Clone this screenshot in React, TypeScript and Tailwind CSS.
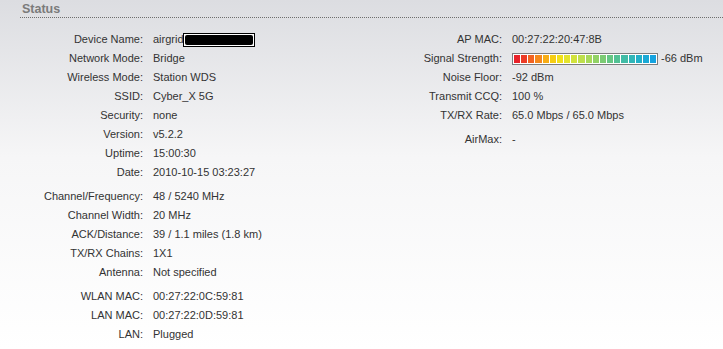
import type { ReactNode } from 'react';

type Row = { label: string; value: ReactNode };

const SIGNAL_COLORS = [
  '#e8222a', '#ec3b26', '#f26322', '#f5891d', '#f7ad16', '#f6cd12', '#f1e01a', '#e4e42c',
  '#d2e23c', '#bedf4c', '#a8d95a', '#92d266', '#7ccb74', '#66c684', '#52c194', '#40bca6',
  '#30b6b8', '#22b0c8', '#1aa9d6', '#15a3e0',
];

function SignalBar() {
  return (
    <span className="flex items-center">
      <span className="flex h-[12px] w-[146px] gap-px border border-[#7d7d7d] bg-white p-px">
        {SIGNAL_COLORS.map((c) => (
          <span key={c} className="h-full flex-1" style={{ backgroundColor: c }} />
        ))}
      </span>
      <span className="ml-[3px]">-66 dBm</span>
    </span>
  );
}

function Redacted() {
  return (
    <span className="flex items-center">
      <span>airgrid</span>
      <span className="-ml-[1px] flex h-[14px] w-[72px] border border-black bg-white p-px">
        <span className="h-full w-full rounded-[2px] bg-black" />
      </span>
    </span>
  );
}

const LEFT: Row[][] = [
  [
    { label: 'Device Name:', value: <Redacted /> },
    { label: 'Network Mode:', value: 'Bridge' },
    { label: 'Wireless Mode:', value: 'Station WDS' },
    { label: 'SSID:', value: 'Cyber_X 5G' },
    { label: 'Security:', value: 'none' },
    { label: 'Version:', value: 'v5.2.2' },
    { label: 'Uptime:', value: '15:00:30' },
    { label: 'Date:', value: '2010-10-15 03:23:27' },
  ],
  [
    { label: 'Channel/Frequency:', value: '48 / 5240 MHz' },
    { label: 'Channel Width:', value: '20 MHz' },
    { label: 'ACK/Distance:', value: '39 / 1.1 miles (1.8 km)' },
    { label: 'TX/RX Chains:', value: '1X1' },
    { label: 'Antenna:', value: 'Not specified' },
  ],
  [
    { label: 'WLAN MAC:', value: '00:27:22:0C:59:81' },
    { label: 'LAN MAC:', value: '00:27:22:0D:59:81' },
    { label: 'LAN:', value: 'Plugged' },
  ],
];

const RIGHT: Row[][] = [
  [
    { label: 'AP MAC:', value: '00:27:22:20:47:8B' },
    { label: 'Signal Strength:', value: <SignalBar /> },
    { label: 'Noise Floor:', value: '-92 dBm' },
    { label: 'Transmit CCQ:', value: '100 %' },
    { label: 'TX/RX Rate:', value: '65.0 Mbps / 65.0 Mbps' },
  ],
  [{ label: 'AirMax:', value: '-' }],
];

function Groups({ groups, labelWidth }: { groups: Row[][]; labelWidth: string }) {
  return (
    <div className="flex flex-col gap-[5px]">
      {groups.map((rows, i) => (
        <div key={i} className="flex flex-col">
          {rows.map((r) => (
            <div key={r.label} className="flex h-[19px] items-center">
              <span className={`${labelWidth} shrink-0 pr-[10px] text-right`}>{r.label}</span>
              <span className="whitespace-nowrap">{r.value}</span>
            </div>
          ))}
        </div>
      ))}
    </div>
  );
}

export default function App() {
  return (
    <div className="h-[349px] w-[723px] overflow-hidden bg-gradient-to-b from-[#dcdde1] via-[#f6f6f7] via-[45%] to-white font-['Liberation_Sans',Arial,sans-serif] text-[11px] text-[#333]">
      <header className="pl-[20px] pt-[3px]">
        <h1 className="pl-[2px] text-[12.5px] font-bold leading-[13px] text-[#7b7b7b]">Status</h1>
        <div className="mt-[1px] border-t border-dotted border-[#6e6e6e]" />
      </header>
      <div className="mt-[12px] flex">
        <div className="w-[360px]">
          <Groups groups={LEFT} labelWidth="w-[153px]" />
        </div>
        <Groups groups={RIGHT} labelWidth="w-[152px]" />
      </div>
    </div>
  );
}
